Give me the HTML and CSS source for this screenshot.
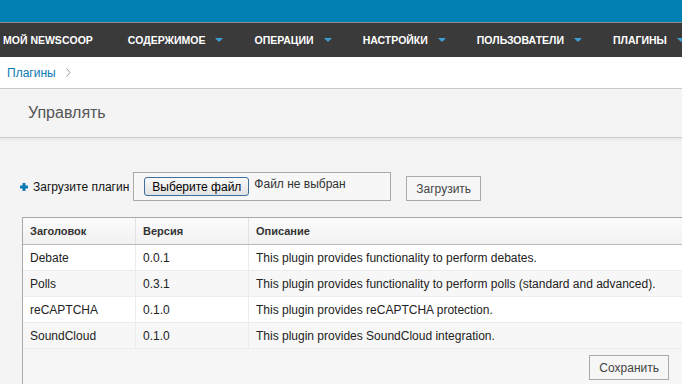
FILE: index.html
```html
<!DOCTYPE html>
<html lang="ru">
<head>
<meta charset="UTF-8">
<title>Плагины</title>
<link rel="stylesheet" href="styles.css">
</head>
<body>
    <div class="topbar"></div>
    <div class="navbar">
        <span class="nav-item home">МОЙ NEWSCOOP</span>
        <span class="nav-item">СОДЕРЖИМОЕ <i class="caret"></i></span>
        <span class="nav-item">ОПЕРАЦИИ <i class="caret"></i></span>
        <span class="nav-item">НАСТРОЙКИ <i class="caret"></i></span>
        <span class="nav-item">ПОЛЬЗОВАТЕЛИ <i class="caret"></i></span>
        <span class="nav-item">ПЛАГИНЫ <i class="caret"></i></span>
    </div>
    <div class="breadcrumb">
        <a href="#">Плагины</a>
        <svg class="sep" width="5" height="9" viewBox="0 0 5 9"><path d="M0.5 0.5 L4 4.5 L0.5 8.5" fill="none" stroke="#8a9aa8" stroke-width="1"/></svg>
    </div>
    <div class="page-title">
        <h1>Управлять</h1>
    </div>
    <div class="content">
        <!-- upload form -->
        <form class="upload">
            <svg class="plus" width="8" height="8" viewBox="0 0 8 8"><path d="M2.5 0h3v2.5h2.5v3h-2.5v2.5h-3v-2.5h-2.5v-3h2.5z" fill="#0a7ab5"/></svg>
            <label>Загрузите плагин</label>
            <div class="file-box">
                <button type="button" class="file-btn">Выберите файл</button>
                <span class="file-name">Файл не выбран</span>
            </div>
            <button type="button" class="btn">Загрузить</button>
        </form>

        <!-- plugins list -->
        <div class="table-wrap">
            <table class="plugins">
                <thead>
                    <tr>
                        <th class="c1">Заголовок</th>
                        <th class="c2">Версия</th>
                        <th>Описание</th>
                    </tr>
                </thead>
                <tbody>
                    <tr>
                        <td>Debate</td>
                        <td>0.0.1</td>
                        <td>This plugin provides functionality to perform debates.</td>
                    </tr>
                    <tr>
                        <td>Polls</td>
                        <td>0.3.1</td>
                        <td>This plugin provides functionality to perform polls (standard and advanced).</td>
                    </tr>
                    <tr>
                        <td>reCAPTCHA</td>
                        <td>0.1.0</td>
                        <td>This plugin provides reCAPTCHA protection.</td>
                    </tr>
                    <tr>
                        <td>SoundCloud</td>
                        <td>0.1.0</td>
                        <td>This plugin provides SoundCloud integration.</td>
                    </tr>
                </tbody>
            </table>
            <div class="table-foot">
                <button type="button" class="btn">Сохранить</button>
            </div>
        </div>
    </div>
</body>
</html>
```

FILE: styles.css
```css
body {
    margin: 0;
    font-family: "Liberation Sans", Arial, sans-serif;
    font-size: 12px;
    color: #222;
    background-color: #f4f4f4;
    overflow: hidden;
}
.topbar {
    height: 22px;
    background-color: #0080b3;
    border-bottom: 1px solid #8c8c8c;
}
.navbar {
    height: 34px;
    background-color: #3a3a3a;
    display: flex;
    align-items: center;
    padding-left: 3px;
    white-space: nowrap;
}
.nav-item {
    display: flex;
    align-items: center;
    color: #fff;
    font-weight: bold;
    font-size: 10.5px;
    margin-right: 31px;
}
.nav-item.home {
    margin-right: 35px;
}
.caret {
    display: inline-block;
    margin-left: 10px;
    width: 0;
    height: 0;
    border-left: 4px solid transparent;
    border-right: 4px solid transparent;
    border-top: 4px solid #3d9fd6;
}
.breadcrumb {
    height: 31px;
    background-color: #fff;
    border-bottom: 1px solid #c9c9c9;
    box-shadow: 0 1px 2px rgba(0,0,0,0.08);
    display: flex;
    align-items: center;
    padding-left: 7px;
    position: relative;
}
.breadcrumb a {
    color: #0a7ab5;
    text-decoration: none;
    font-size: 12px;
}
.breadcrumb .sep {
    margin-left: 10px;
}
.page-title {
    height: 48px;
    background-color: #f4f4f4;
    border-bottom: 1px solid #cbcbcb;
    box-shadow: 0 2px 3px rgba(0,0,0,0.06);
    display: flex;
    align-items: center;
    padding-left: 28px;
    position: relative;
}
h1 {
    margin: 0;
    font-size: 16px;
    font-weight: normal;
    color: #555;
}
.content {
    padding: 34px 0 0 20px;
}
.upload {
    display: flex;
    align-items: center;
    margin: 0;
}
.plus {
    margin-right: 5px;
}
.upload label {
    font-size: 12px;
    color: #111;
    margin-right: 4px;
}
.file-box {
    box-sizing: border-box;
    width: 258px;
    height: 29px;
    border: 1px solid #a9a9a9;
    background-color: #f7f7f7;
    display: flex;
    align-items: flex-start;
    padding-left: 10px;
}
.file-btn {
    margin-top: 4px;
    height: 19px;
    padding: 0 7px;
    font-family: "Liberation Sans", Arial, sans-serif;
    font-size: 12px;
    color: #000;
    border: 1px solid #3f6f9e;
    border-radius: 3px;
    background: linear-gradient(to bottom, #fafafa, #e2e2e2);
}
.file-name {
    margin-left: 5px;
    margin-top: 4px;
    color: #333;
}
.btn {
    margin-left: 15px;
    margin-top: 4px;
    height: 25px;
    padding: 0 9px;
    font-family: "Liberation Sans", Arial, sans-serif;
    font-size: 12px;
    color: #444;
    background-color: #f6f6f6;
    border: 1px solid #a9a9a9;
}
.table-wrap {
    margin-top: 16px;
    margin-left: 2px;
    width: 660px;
    border: 1px solid #a9a9a9;
    border-right: none;
    background-color: #f6f6f6;
}
.plugins {
    width: 100%;
    border-collapse: collapse;
}
.plugins th {
    text-align: left;
    font-size: 11px;
    font-weight: bold;
    color: #333;
    height: 26px;
    padding: 0 7px;
    background: linear-gradient(to bottom, #fbfbfb, #f1f1f1);
    border-bottom: 1px solid #b9b9b9;
    border-right: 1px solid #e2e2e2;
}
.plugins .c1, .plugins .c2 {
    width: 98px;
}
.plugins td {
    height: 25px;
    padding: 0 7px;
    color: #222;
    border-bottom: 1px solid #ececec;
    border-right: 1px solid #ececec;
    white-space: nowrap;
}
.plugins tbody tr:nth-child(odd) td {
    background-color: #fff;
}
.plugins tbody tr:nth-child(even) td {
    background-color: #f7f7f7;
}
.table-foot {
    height: 40px;
    display: flex;
    justify-content: flex-end;
    padding-right: 14px;
}
.table-foot .btn {
    margin-top: 6px;
}
```
